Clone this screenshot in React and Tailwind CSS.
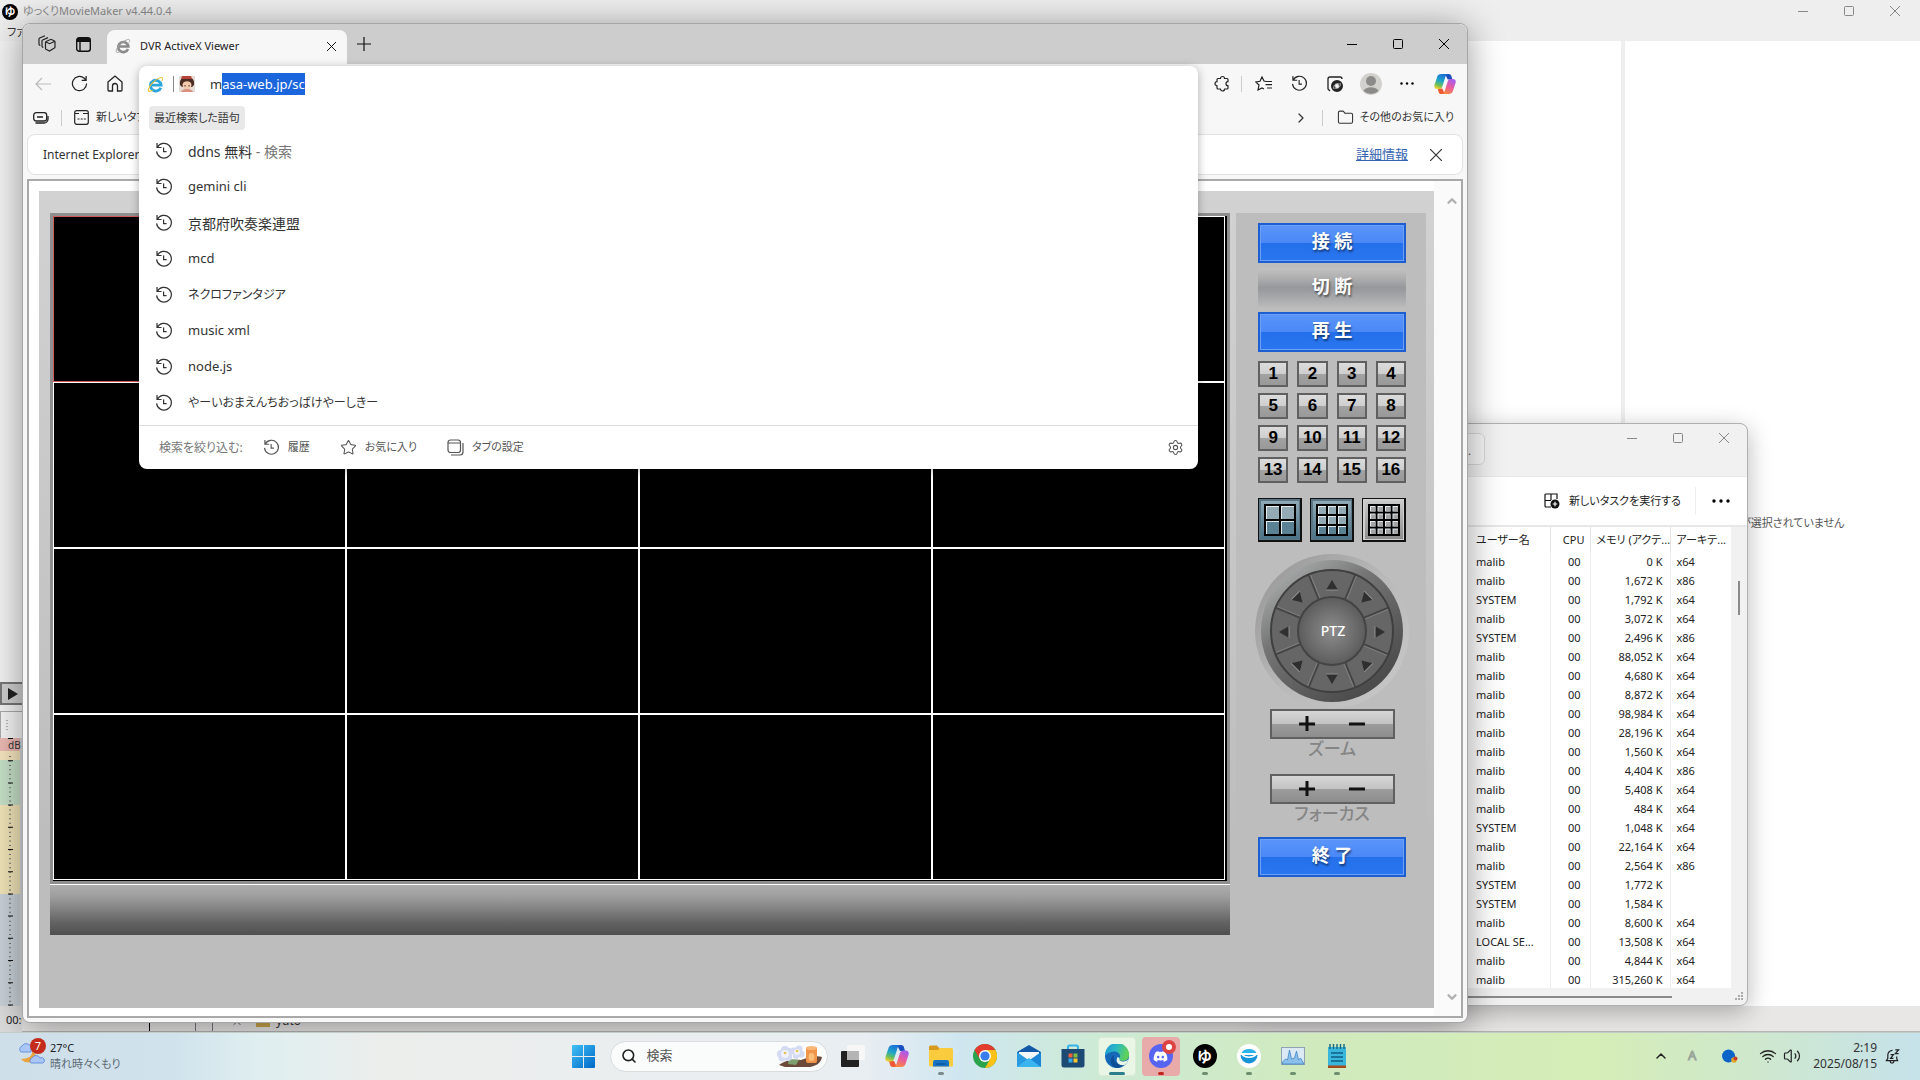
import { useEffect, useRef } from "react";
import {
  ChevronUp,
  ChevronDown,
  ChevronRight,
  Search,
  Settings,
  Star,
  Folder,
  Wifi,
  Volume2,
} from "lucide-react";
import { FaDiscord } from "react-icons/fa";

const history = [
  { text: "ddns 無料", suffix: " - 検索", size: "text-[14px]" },
  { text: "gemini cli" },
  { text: "京都府吹奏楽連盟", size: "text-[14px]" },
  { text: "mcd" },
  { text: "ネクロファンタジア", size: "text-[12px]" },
  { text: "music xml" },
  { text: "node.js" },
  { text: "やーいおまえんちおっばけやーしきー", size: "text-[12px]" },
];

const processes = [
  ["malib", "0 K", "x64"],
  ["malib", "1,672 K", "x86"],
  ["SYSTEM", "1,792 K", "x64"],
  ["malib", "3,072 K", "x64"],
  ["SYSTEM", "2,496 K", "x86"],
  ["malib", "88,052 K", "x64"],
  ["malib", "4,680 K", "x64"],
  ["malib", "8,872 K", "x64"],
  ["malib", "98,984 K", "x64"],
  ["malib", "28,196 K", "x64"],
  ["malib", "1,560 K", "x64"],
  ["malib", "4,404 K", "x86"],
  ["malib", "5,408 K", "x64"],
  ["malib", "484 K", "x64"],
  ["SYSTEM", "1,048 K", "x64"],
  ["malib", "22,164 K", "x64"],
  ["malib", "2,564 K", "x86"],
  ["SYSTEM", "1,772 K", ""],
  ["SYSTEM", "1,584 K", ""],
  ["malib", "8,600 K", "x64"],
  ["LOCAL SE...", "13,508 K", "x64"],
  ["malib", "4,844 K", "x64"],
  ["malib", "315,260 K", "x64"],
];

/* ---------- icons ---------- */

const HistoryIcon = ({ className = "size-[18px]" }) => (
  <svg viewBox="0 0 18 18" fill="none" stroke="currentColor" strokeWidth="1.2" className={className}>
    <path d="M2 1v4.500h4.500M2.300 5.500A7.400 7.400 0 1 1 1.600 9.400" />
    <path d="M8.600 5.400v4.200h3" />
  </svg>
);

const CopilotIcon = ({ className }) => (
  <svg viewBox="0 0 24 24" className={className}>
    <defs>
      <linearGradient id="cpA" x1="0.6" y1="0" x2="0.3" y2="1">
        <stop offset="0" stopColor="#1a6fd6" />
        <stop offset="0.45" stopColor="#1fa6c9" />
        <stop offset="0.75" stopColor="#6bbf5a" />
        <stop offset="1" stopColor="#f3cf2c" />
      </linearGradient>
      <linearGradient id="cpB" x1="0.7" y1="0" x2="0.3" y2="1">
        <stop offset="0" stopColor="#a35cf0" />
        <stop offset="0.5" stopColor="#e85aa0" />
        <stop offset="1" stopColor="#fb8a3c" />
      </linearGradient>
    </defs>
    <path d="M12 1h4c2 0 2.600 1 3.100 2.800L20 7h-5z" fill="#1a4fc0" />
    <path d="M12 23H8c-2 0-2.600-1-3.100-2.800L4 17h5z" fill="#ee5a34" />
    <path d="M8 1h7c-1.600.6-2.200 2-2.800 4l-3 9.500C8.500 16.600 7.600 17.500 5.600 17.500H3.500C.6 17.500-.2 15.400.6 12.700L3.500 4C4.200 2 5.500 1 8 1z" fill="url(#cpA)" />
    <path d="M16 23H9c1.600-.6 2.200-2 2.800-4l3-9.500c.7-2.100 1.600-3 3.600-3h2.100c2.900 0 3.700 2.100 2.900 4.800L20.500 20c-.7 2-2 3-4.500 3z" fill="url(#cpB)" />
  </svg>
);

const IEIcon = ({ className, color = "#2ba6dd", ring = "#f1c232" }) => (
  <svg viewBox="0 0 24 24" className={className} fill="none">
    <path d="M19.500 16.500A7.600 7.600 0 1 1 20 12.800H6" stroke={color} strokeWidth="4" />
    <path d="M21 7c2-4.500.5-6-4-4C11 5.500 3.500 13 2 18.500c-1 4 2 4 6 1.500" stroke={ring} strokeWidth="1.500" />
  </svg>
);

const MinusLine = ({ className }) => (
  <svg viewBox="0 0 10 10" className={className} stroke="currentColor">
    <path d="M0 5.500h10" />
  </svg>
);
const Square = ({ className }) => (
  <svg viewBox="0 0 10 10" className={className} stroke="currentColor" fill="none">
    <rect x=".5" y=".5" width="9" height="9" rx="1" />
  </svg>
);
const Cross = ({ className }) => (
  <svg viewBox="0 0 10 10" className={className} stroke="currentColor" fill="none">
    <path d="M0 0l10 10M10 0L0 10" />
  </svg>
);

const WindowButtons = ({ className = "" }) => (
  <div className={`flex shrink-0 ${className}`}>
    <button aria-label="最小化" className="w-[46px] grid place-items-center">
      <MinusLine className="size-[10px]" />
    </button>
    <button aria-label="最大化" className="w-[46px] grid place-items-center">
      <Square className="size-[10px]" />
    </button>
    <button aria-label="閉じる" className="w-[46px] grid place-items-center">
      <Cross className="size-[10px]" />
    </button>
  </div>
);

const YmmIcon = ({ className }) => (
  <span className={`rounded-full bg-black text-white font-bold grid place-items-center leading-none ${className}`}>
    ゆ
  </span>
);

/* ---------- movie maker, behind everything ---------- */

const MovieMaker = () => (
  <div className="absolute inset-0 flex flex-col bg-white">
    <div className="h-[41px] shrink-0 bg-[#eeeeee] flex justify-between">
      <div className="flex flex-col">
        <div className="flex items-center gap-[5px] pl-[2px] h-[23px]">
          <YmmIcon className="size-4 text-[11px]" />
          <span className="text-[11px] text-[#8c8c8c]">ゆっくりMovieMaker v4.44.0.4</span>
        </div>
        <button className="text-[11px] leading-[18px] pl-[7px] text-left text-[#333]">ファ</button>
      </div>
      <WindowButtons className="h-[21px] text-[#888] pr-[2px]" />
    </div>
    <div className="flex-1 min-h-0 flex">
      <div className="w-[22px] shrink-0 bg-[#f3f3f3] flex flex-col justify-end">
        <button aria-label="再生" className="h-[23px] w-[30px] border-2 border-[#777] bg-[#cfcfcf] pl-[6px] shrink-0">
          <svg viewBox="0 0 10 12" className="h-[12px] w-[10px]">
            <path d="M0 0l10 6-10 6z" fill="#222" />
          </svg>
        </button>
        <div className="mt-[6px] h-[27px] w-[30px] shrink-0 border-t border-l border-[#aaa] bg-[#f5f5f5] pt-2 pl-1">
          <svg viewBox="0 0 4 12" className="h-[12px] w-[4px]">
            <path d="M2 0v12" stroke="#777" strokeDasharray="1 2" />
          </svg>
        </div>
        <div className="h-[268px] shrink-0 flex bg-[#d6d8da]">
          <div className="w-5 h-full relative">
            <div className="h-[13px] bg-[#ecb9b4] text-[10px] leading-[14px] pl-2 text-[#333]">dB</div>
            <div className="h-[9px] bg-[#f7e6bf]" />
            <div className="h-[45px] bg-[#c6e0c7]" />
            <div className="h-[89px] bg-[#f1e4b8]" />
            <div className="h-[112px] bg-[#c9d2d8]" />
            <svg viewBox="0 0 20 268" className="absolute inset-0 w-5 h-[268px]">
              <path d="M10 18v250" stroke="#777" strokeWidth="2" strokeDasharray="1 3.450" />
              <path d="M10.500 0v268" stroke="#111" strokeWidth="5" strokeDasharray="1 21.200" />
            </svg>
          </div>
        </div>
        <div className="h-[26px] shrink-0 bg-[#dcdcdc] pl-[6px] text-[11px] leading-[28px] text-[#222] whitespace-nowrap">00:0</div>
      </div>
      <div className="flex-1 flex flex-col min-w-0">
        <div className="flex-1 flex justify-end min-h-0">
          <div className="w-[299px] border-l-4 border-[#eeeeee] pl-[115px] pt-[474px] text-[11px] text-[#555] whitespace-nowrap">
            が選択されていません
          </div>
        </div>
        <div className="h-[26px] shrink-0 bg-[#e9e6e6] border-b border-[#b5b5b5] flex items-end overflow-hidden">
          <span className="h-[14px] border-r border-black w-[128px]" />
          <span className="h-[14px] border-r border-[#777] w-[46px]" />
          <span className="h-[14px] border-r border-[#777] w-[17px]" />
          <ChevronUp className="size-3 text-[#555] ml-[18px] mb-[2px]" />
          <span className="h-[10px] w-[14px] bg-[#c9a64a] ml-[13px] mb-[4px]" />
          <span className="text-[12px] leading-[16px] ml-[6px] mb-[2px] text-[#333]">yuto</span>
        </div>
      </div>
    </div>
  </div>
);

/* ---------- task manager ---------- */

const TaskManager = () => (
  <section className="absolute right-[172px] top-[423px] bottom-[26px] w-[500px] rounded-lg border border-[#b0b0b0] bg-[#f1f1f1] shadow-[0_6px_24px_rgba(0,0,0,0.28)] flex flex-col overflow-hidden">
    <div className="h-[52px] shrink-0 flex items-start justify-between">
      <div className="mt-[9px] h-[32px] w-[236px] rounded-md border border-[#d8d8d8] bg-[#f7f7f7] text-[11px] leading-[34px] text-[#444] text-right pr-[13px]">
        .
      </div>
      <WindowButtons className="h-[28px] text-[#888]" />
    </div>
    <div className="h-[51px] shrink-0 bg-white border-t border-b-2 border-[#e8e8e8] flex items-center justify-end">
      <button className="flex items-center gap-[9px] text-[11px] text-[#222] whitespace-nowrap">
        <svg viewBox="0 0 16 16" className="size-4" fill="none" stroke="#111" strokeWidth="1.200">
          <path d="M7 14H2a1 1 0 0 1-1-1V2a1 1 0 0 1 1-1h11v5M1 7.500h6M7 1v6" />
          <circle cx="11" cy="11" r="4.500" fill="#111" stroke="none" />
          <path d="M11 8.700v4.600M8.700 11h4.600" stroke="#fff" />
        </svg>
        新しいタスクを実行する
      </button>
      <span className="ml-[14px] h-7 border-l border-[#eee]" />
      <button aria-label="その他" className="ml-[16px] mr-[17px]">
        <svg viewBox="0 0 18 4" className="w-[18px] h-1">
          <circle cx="2" cy="2" r="1.700" />
          <circle cx="9" cy="2" r="1.700" />
          <circle cx="16" cy="2" r="1.700" />
        </svg>
      </button>
    </div>
    <div className="flex-1 min-h-0 flex">
      <div className="flex-1 bg-white pl-[221px] overflow-hidden">
        <table className="w-full table-fixed text-[11px] leading-[19px] text-[#222]">
          <colgroup>
            <col className="w-[80px]" />
            <col className="w-[40px]" />
            <col className="w-[80px]" />
            <col />
          </colgroup>
          <thead>
            <tr className="h-[25px] whitespace-nowrap [&>th]:font-normal [&>th]:text-[11px] [&>th]:text-left">
              <th className="border-r border-[#e4e4e4] pl-[6px]">ユーザー名</th>
              <th className="border-r border-[#e4e4e4]"><span className="block text-right pr-[5px]">CPU</span></th>
              <th className="border-r border-[#e4e4e4] pl-[6px]">メモリ (アクテ...</th>
              <th className="pl-[6px]">アーキテ...</th>
            </tr>
          </thead>
          <tbody>
            {processes.map((p, i) => (
              <tr key={i} className="h-[19px] whitespace-nowrap">
                <td className="border-r border-[#eeeeee] pl-[6px]">{p[0]}</td>
                <td className="border-r border-[#eeeeee] text-right pr-[9px]">00</td>
                <td className="border-r border-[#eeeeee] text-right pr-[7px]">{p[1]}</td>
                <td className="pl-[6px]">{p[2]}</td>
              </tr>
            ))}
          </tbody>
        </table>
      </div>
      <div className="w-[16px] shrink-0 flex justify-center pt-[54px]">
        <div className="h-[34px] w-[2px] bg-[#8a8a8a]" />
      </div>
    </div>
    <div className="h-[17px] shrink-0 flex justify-between items-center">
      <div className="h-[2px] w-[423px] bg-[#8a8a8a]" />
      <svg viewBox="0 0 9 9" className="size-[9px] mr-[3px]" fill="#aaa">
        <path d="M6 0h2v2H6zM3 3h2v2H3zM6 3h2v2H6zM0 6h2v2H0zM3 6h2v2H3zM6 6h2v2H6z" />
      </svg>
    </div>
  </section>
);

/* ---------- DVR page ---------- */

const BlueButton = ({ children, className = "" }) => (
  <button
    className={`h-[40px] w-full border-2 border-[#1d5fd0] shadow-[inset_0_0_0_1px_#6ba2f8] bg-[linear-gradient(#5b95fb_0%,#4a88f6_50%,#2470ea_51%,#2a76f0_100%)] text-white text-[18px] font-bold leading-[28px] pb-1 [text-shadow:1px_2px_2px_rgba(0,0,0,0.5)] ${className}`}
  >
    {children}
  </button>
);

const LayoutButton = ({ n, blue }) => {
  const step = 30 / n;
  const cells = [];
  for (let r = 0; r < n; r++) {
    for (let c = 0; c < n; c++) cells.push([7 + c * step, 7 + r * step]);
  }
  return (
    <button aria-label={`${n * n}分割`} className="size-[44px]">
      <svg viewBox="0 0 44 44" className="size-[44px]">
        <defs>
          <linearGradient id={`lay${n}`} x1="0" y1="0" x2="0" y2="1">
            <stop offset="0" stopColor={blue ? "#8fa9b6" : "#c9c9c9"} />
            <stop offset="1" stopColor={blue ? "#4a7286" : "#8d8d8d"} />
          </linearGradient>
        </defs>
        <rect width="44" height="44" fill="#111" />
        <rect x="1" y="1" width="41" height="41" fill={blue ? "#5b7684" : "#d0d0d0"} />
        <rect x="3" y="3" width="38" height="38" fill={`url(#lay${n})`} />
        <rect x="6" y="6" width="32" height="32" fill="#000" />
        {cells.map(([x, y], i) => (
          <g key={i}>
            <rect x={x + 1} y={y + 1} width={step - 2} height={step - 2} fill="#e4eaed" />
            <rect
              x={x + 2}
              y={y + 2}
              width={step - 3}
              height={step - 3}
              fill={blue ? (y > 19 ? "#5b8294" : "#93aab5") : "#a5a5a5"}
            />
          </g>
        ))}
      </svg>
    </button>
  );
};

const arrows = [
  [78, 32, 0],
  [111, 46, 225],
  [126, 79, 90],
  [111, 111, 315],
  [78, 126, 180],
  [45, 111, 45],
  [30, 79, 270],
  [45, 46, 135],
];

const PtzPad = () => (
  <svg viewBox="0 0 156 156" className="w-[156px] h-[156px] shrink-0" role="img" aria-label="PTZ">
    <defs>
      <linearGradient id="ptzRing" x1="0.150" y1="0.100" x2="0.750" y2="0.900">
        <stop offset="0" stopColor="#a5a8a8" />
        <stop offset="0.350" stopColor="#757575" />
        <stop offset="1" stopColor="#4c4c4c" />
      </linearGradient>
      <linearGradient id="ptzHalo" x1="0" y1="0" x2="0.900" y2="0.800">
        <stop offset="0" stopColor="#949494" />
        <stop offset="0.600" stopColor="#b9b9b9" />
        <stop offset="1" stopColor="#c4c4c4" />
      </linearGradient>
      <radialGradient id="ptzHub">
        <stop offset="0" stopColor="#8d8d8d" />
        <stop offset="1" stopColor="#5c5c5c" />
      </radialGradient>
    </defs>
    <circle cx="78" cy="78" r="77" fill="url(#ptzHalo)" />
    <circle cx="78" cy="78" r="71" fill="url(#ptzRing)" />
    <circle cx="78" cy="78" r="61" fill="#666" stroke="#3f3f3f" strokeWidth="2" />
    {[22.5, 67.5, 112.5, 157.5, 202.5, 247.5, 292.5, 337.5].map((a) => (
      <g key={a} transform={`rotate(${a} 78 78)`}>
        <path d="M78 17v28" stroke="#444" strokeWidth="2" />
        <path d="M79.500 18v26" stroke="#808080" strokeWidth="1" />
      </g>
    ))}
    <circle cx="78" cy="78" r="34" fill="url(#ptzHub)" stroke="#444" strokeWidth="2" />
    {arrows.map(([x, y, a]) => (
      <g key={a} transform={`translate(${x} ${y}) rotate(${a})`}>
        <path d="M0-5L6 5H-6z" fill="#2f2f2f" />
        <path d="M6 5H-6" stroke="#8f8f8f" strokeWidth="1" />
      </g>
    ))}
    <text x="79" y="83" textAnchor="middle" fill="#fff" fontSize="14" fontWeight="500">
      PTZ
    </text>
  </svg>
);

const PlusMinus = ({ label }) => (
  <div className="flex flex-col items-center">
    <div className="h-[30px] w-[125px] border-2 border-[#606060] bg-[linear-gradient(#d6d6d6_0%,#c2c2c2_50%,#9c9c9c_51%,#8d8d8d_100%)] flex items-center justify-center gap-[34px]">
      <button aria-label={`${label} +`}>
        <svg viewBox="0 0 16 16" className="size-4">
          <path d="M8 0v15M0 8h16" stroke="#111" strokeWidth="3" />
        </svg>
      </button>
      <button aria-label={`${label} -`}>
        <svg viewBox="0 0 16 16" className="size-4">
          <path d="M0 8h16" stroke="#111" strokeWidth="3" />
        </svg>
      </button>
    </div>
    <span className="text-[17px] leading-[20px] font-medium text-[#858585]">{label}</span>
  </div>
);

const DvrPage = () => (
  <div className="flex-1 min-h-0 mx-[4px] mb-[4px] mt-[4px] border-2 border-[#a9a9a9] bg-white flex">
    <div className="flex-1 min-w-0 ml-[10px] mt-[10px] mb-[8px] pt-[22px] pl-[11px] pr-[8px] bg-[linear-gradient(#d2d2d2,#bdbdbd_80%)] flex gap-[6px]">
      <div className="flex-1 flex flex-col pb-[73px]">
        <div className="flex-1 border-[3px] border-[#8f8f8f] flex flex-col">
          <div className="flex-1 bg-black border-r-2 border-b border-black grid grid-cols-4 grid-rows-4">
            {Array.from({ length: 16 }, (_, i) => (
              <div key={i} className={i === 0 ? "border border-[#d05a5a]" : "border border-white"} />
            ))}
          </div>
        </div>
        <div className="h-[51px] shrink-0 border-t border-white bg-[linear-gradient(#adadad,#9c9c9c_25%,#636363_75%,#4f4f4f)]" />
      </div>
      <div className="w-[190px] shrink-0 bg-[#bdbdbd]">
        <div className="w-[148px] ml-[22px] pt-[10px] flex flex-col">
          <BlueButton>接 続</BlueButton>
          <button className="my-[5px] h-[39px] bg-[linear-gradient(#c2c2c2_0%,#b3b3b3_20%,#96989b_50%,#9b9da0_60%,#bababa_100%)] text-white text-[18px] font-bold leading-[28px] pb-1 [text-shadow:1px_2px_2px_rgba(0,0,0,0.5)]">
            切 断
          </button>
          <BlueButton>再 生</BlueButton>
          <div className="mt-[9px] grid grid-cols-4 gap-x-[9px] gap-y-[6px]">
            {Array.from({ length: 16 }, (_, i) => (
              <button
                key={i}
                className="h-[26px] border-2 border-[#606060] bg-[linear-gradient(#dcdcdc_0%,#cecece_50%,#a2a2a2_51%,#999_100%)] font-['Liberation_Sans'] font-bold text-[17px] leading-[22px] text-black"
              >
                {i + 1}
              </button>
            ))}
          </div>
          <div className="mt-[15px] flex justify-between">
            <LayoutButton n={2} blue />
            <LayoutButton n={3} blue />
            <LayoutButton n={4} />
          </div>
          <div className="mt-[11px] flex justify-center">
            <PtzPad />
          </div>
          <div className="flex flex-col gap-[15px]">
            <PlusMinus label="ズーム" />
            <PlusMinus label="フォーカス" />
          </div>
          <BlueButton className="mt-[13px]">終 了</BlueButton>
        </div>
      </div>
    </div>
    <div className="w-[27px] shrink-0 bg-[#fafafa] flex flex-col items-center justify-between pl-[8px] pt-[13px] pb-[12px] text-[#b0b0b0]">
      <ChevronUp className="size-[14px]" strokeWidth={4} />
      <ChevronDown className="size-[14px]" strokeWidth={4} />
    </div>
  </div>
);

/* ---------- address bar with suggestions ---------- */

const Suggestions = () => {
  const url = useRef(null);
  useEffect(() => {
    url.current.focus();
    url.current.setSelectionRange(1, 14);
  }, []);
  return (
    <div className="absolute left-[116px] right-[269px] top-[42px] bg-white rounded-lg shadow-[0_2px_10px_rgba(0,0,0,0.3)]">
      <div className="h-[36px] flex items-center pl-[8px]">
        <IEIcon className="size-[17px]" />
        <span className="ml-[9px] h-4 border-l border-[#888]" />
        <svg viewBox="0 0 16 16" className="size-4 ml-[5px]">
          <rect width="16" height="16" fill="#e6dcd6" />
          <path d="M1 9C0 3 4 1 8 1s8 2 7 8l-2 2H3z" fill="#4a2c22" />
          <circle cx="8" cy="9" r="4.500" fill="#f3c9ae" />
          <path d="M3 8c2-3 7-4 10 0L12 4H5z" fill="#4a2c22" />
          <path d="M3 0h9l1 3H2z" fill="#b5433a" />
          <path d="M2 16c1-4 11-4 12 0z" fill="#d98f80" />
          <path d="M6 9v1.500M10 9v1.500" stroke="#432" />
        </svg>
        <input
          ref={url}
          aria-label="アドレス"
          defaultValue="masa-web.jp/sc"
          className="ml-[15px] w-[600px] outline-none text-[13px] leading-[22px] h-[22px] text-[#333] selection:bg-[#1b66dd] selection:text-white"
        />
      </div>
      <span className="block w-fit mt-[4px] ml-[10px] h-6 rounded bg-[#e9e9e9] px-[5px] text-[11px] leading-6 text-[#333]">
        最近検索した語句
      </span>
      <ul className="mt-[3px] mb-[4px]">
        {history.map((h) => (
          <li key={h.text} className="h-9 flex items-center pl-[16px] gap-[15px] text-[#333]">
            <HistoryIcon className="size-[18px]" />
            <span className={h.size || "text-[13px]"}>
              {h.text}
              {h.suffix && <span className="text-[#767676] whitespace-pre">{h.suffix}</span>}
            </span>
          </li>
        ))}
      </ul>
      <div className="h-[44px] border-t border-[#dcdcdc] flex items-center pl-[20px] pr-[14px] text-[11px] text-[#555]">
        <span className="text-[12px] text-[#777]">検索を絞り込む:</span>
        <button className="ml-[20px] flex items-center gap-[8px]">
          <HistoryIcon className="size-[17px]" />
          履歴
        </button>
        <button className="ml-[30px] flex items-center gap-[8px]">
          <Star className="size-[17px]" strokeWidth={1.5} />
          お気に入り
        </button>
        <button className="ml-[30px] flex items-center gap-[8px]">
          <svg viewBox="0 0 17 17" className="size-[17px]" fill="none" stroke="currentColor" strokeWidth="1.200">
            <rect x="1" y="1" width="12.500" height="12.500" rx="2.500" />
            <path d="M1 4h12.500M16 4v9a3 3 0 0 1-3 3H4" />
          </svg>
          タブの設定
        </button>
        <button aria-label="設定" className="ml-auto">
          <Settings className="size-[17px]" strokeWidth={1.5} />
        </button>
      </div>
    </div>
  );
};

/* ---------- browser ---------- */

const Browser = () => (
  <section className="absolute left-[22px] right-[452px] top-[23px] bottom-[9px] rounded-lg border border-[#a6a6a6] bg-[#f7f7f7] shadow-[0_4px_36px_rgba(0,0,0,0.4)] flex flex-col">
    <div className="h-[40px] shrink-0 bg-[#cdcdcd] rounded-t-lg flex text-black">
      <button aria-label="ワークスペース" className="w-[48px] grid place-items-center">
        <svg viewBox="0 0 18 18" className="size-[18px]" fill="none" stroke="#222" strokeWidth="1.200">
          <path d="M7.500 7.500a1 1 0 0 1 .6-1L13 4.300l3.500 1.700a1 1 0 0 1 .5 1v5a1 1 0 0 1-.6 1L11.500 16 8 14.300a1 1 0 0 1-.5-1zM8 7l3.500 1.700L16.500 6.500" />
          <path d="M5.300 12.500l-.8-.4a1 1 0 0 1-.5-.9V6a1 1 0 0 1 .6-1L10 2.600" />
          <path d="M2.300 10.500l-.8-.4A1 1 0 0 1 1 9.200V4a1 1 0 0 1 .6-1L7 .8" />
        </svg>
      </button>
      <button aria-label="タブ操作" className="w-[24px] grid place-items-center">
        <svg viewBox="0 0 15 15" className="size-[15px]" fill="none" stroke="#111" strokeWidth="1.400">
          <rect x=".7" y=".7" width="13.600" height="13.600" rx="2.500" />
          <path d="M1 3h13" strokeWidth="4" />
          <path d="M4 3v11" />
        </svg>
      </button>
      <div className="ml-[12px] mt-[6px] w-[240px] rounded-t-lg bg-[#f7f7f7] flex items-center pl-[8px] pr-[11px] pb-[2px] text-[11px]">
        <IEIcon className="size-4" color="#8a8a8a" ring="#a5a5a5" />
        <span className="ml-[9px] text-[#222]">DVR ActiveX Viewer</span>
        <button aria-label="タブを閉じる" className="ml-auto">
          <Cross className="size-[9px]" />
        </button>
      </div>
      <button aria-label="新しいタブ" className="ml-[10px]">
        <svg viewBox="0 0 14 14" className="size-[14px]" stroke="#111" strokeWidth="1.200">
          <path d="M7 0v14M0 7h14" />
        </svg>
      </button>
      <WindowButtons className="ml-auto" />
    </div>
    <div className="h-[39px] shrink-0 flex items-center text-[#222]">
      <button aria-label="戻る" className="w-[40px] grid place-items-center text-[#bbb]">
        <svg viewBox="0 0 16 14" className="w-4 h-[14px]" fill="none" stroke="currentColor" strokeWidth="1.200">
          <path d="M16 7H1M7 1L1 7l6 6" />
        </svg>
      </button>
      <button aria-label="更新" className="w-[32px] grid place-items-center">
        <svg viewBox="0 0 18 18" className="size-[17px]" fill="none" stroke="currentColor" strokeWidth="1.300">
          <path d="M16.500 9A7.500 7.500 0 1 1 14 3.500L16 5.500M16 1v4.700h-4.700" />
        </svg>
      </button>
      <button aria-label="ホーム" className="w-[40px] grid place-items-center">
        <svg viewBox="0 0 16 17" className="w-4 h-[17px]" fill="none" stroke="currentColor" strokeWidth="1.300">
          <path d="M1 7l7-6 7 6v8a1 1 0 0 1-1 1h-3.500v-5a2.500 2.500 0 0 0-5 0v5H2a1 1 0 0 1-1-1z" />
        </svg>
      </button>
      <div className="ml-auto flex items-center pr-[6px]">
        <button aria-label="拡張機能" className="w-[32px] grid place-items-center">
          <svg viewBox="0 0 16 17" className="w-4 h-[17px]" fill="none" stroke="currentColor" strokeWidth="1.200" strokeLinejoin="round">
            <path d="M4 3.500h2.500a2 2 0 0 1 4 0H13a1 1 0 0 1 1 1v2.200a2 2 0 0 0 0 4V13a1 1 0 0 1-1 1h-2.500a2 2 0 0 1-4 0H4a1 1 0 0 1-1-1v-2.300a2 2 0 0 1 0-4V4.500a1 1 0 0 1 1-1z" />
          </svg>
        </button>
        <span className="ml-[3px] h-4 border-l border-[#ccc]" />
        <button aria-label="お気に入り" className="ml-[3px] w-[36px] grid place-items-center">
          <svg viewBox="0 0 17 16" className="w-[17px] h-4" fill="none" stroke="currentColor" strokeWidth="1.200">
            <path d="M11 5.500L9 5 7 1 5 5.300.8 6 4 9l-1 5 4-2 2 1M11 5.500h6M10.500 8.700H17M12 12h5" />
          </svg>
        </button>
        <button aria-label="履歴" className="w-[36px] grid place-items-center">
          <HistoryIcon className="size-[17px]" />
        </button>
        <button aria-label="IE モード" className="w-[36px] grid place-items-center">
          <svg viewBox="0 0 16 16" className="size-4" fill="none" stroke="#222" strokeWidth="1.300">
            <path d="M3 15L1 13V3a2 2 0 0 1 2-2h10a2 2 0 0 1 2 2" />
            <circle cx="10" cy="10" r="4" strokeWidth="4" />
            <path d="M7 13c-1-4 2-6 5-5M13 7c1 4-2 6-5 5" stroke="#f7f7f7" strokeWidth=".8" />
          </svg>
        </button>
        <button aria-label="プロファイル" className="w-[36px] grid place-items-center">
          <svg viewBox="0 0 22 22" className="size-[22px]">
            <circle cx="11" cy="11" r="11" fill="#d3d1ce" />
            <circle cx="11" cy="8" r="5" fill="#8d8b89" />
            <path d="M3.500 18c2-5 13-5 15 0a11 11 0 0 1-15 0z" fill="#8d8b89" />
          </svg>
        </button>
        <button aria-label="メニュー" className="w-[36px] grid place-items-center">
          <svg viewBox="0 0 14 3" className="w-[14px] h-[3px]">
            <circle cx="1.500" cy="1.500" r="1.200" />
            <circle cx="7" cy="1.500" r="1.200" />
            <circle cx="12.500" cy="1.500" r="1.200" />
          </svg>
        </button>
        <button aria-label="Copilot" className="w-[36px] pl-1 grid place-items-center">
          <CopilotIcon className="size-[22px]" />
        </button>
      </div>
    </div>
    <div className="h-[29px] shrink-0 flex items-center text-[11px] text-[#333]">
      <svg viewBox="0 0 16 12" className="ml-[10px] w-4 h-3 shrink-0" fill="none" stroke="#222" strokeWidth="1.300">
        <rect x=".7" y=".7" width="13" height="8.300" rx="2.500" />
        <path d="M4 5h6M2.500 11H11a4 4 0 0 0 4-4V4" />
      </svg>
      <span className="ml-[12px] h-4 border-l border-[#ccc]" />
      <button className="ml-[12px] flex items-center gap-[7px]">
        <svg viewBox="0 0 15 15" className="size-[15px]" fill="none" stroke="#222" strokeWidth="1.200">
          <rect x=".7" y=".7" width="13.600" height="13.600" rx="2" />
          <path d="M1 3.500h4M9 3.500h5M3.500 9h2M6.700 9h2M9.800 9h2" />
        </svg>
        新しいタブ
      </button>
      <button aria-label="さらに表示" className="ml-auto">
        <ChevronRight className="size-4" strokeWidth={1.8} />
      </button>
      <span className="ml-[13px] h-4 border-l border-[#ccc]" />
      <button className="ml-[14px] mr-[13px] flex items-center gap-[6px]">
        <Folder className="size-[17px]" strokeWidth={1.5} />
        その他のお気に入り
      </button>
    </div>
    <div className="mx-[4px] mt-[2px] h-[41px] shrink-0 rounded-lg border border-[#e2e2e2] bg-white flex items-center pl-[15px] text-[12px] text-[#333]">
      <span>Internet Explorer</span>
      <a href="#" className="ml-auto text-[13px] text-[#3565b0] underline">
        詳細情報
      </a>
      <button aria-label="閉じる" className="ml-[22px] mr-[20px]">
        <Cross className="size-3" />
      </button>
    </div>
    <DvrPage />
    <Suggestions />
  </section>
);

/* ---------- taskbar ---------- */

const TaskButton = ({ label, dot = "", className = "", children }) => (
  <button aria-label={label} className="relative w-[44px] h-[46px] flex items-center justify-center">
    <span className={`w-[38px] h-[39px] rounded flex items-center justify-center ${className}`}>{children}</span>
    {dot && <span className={`absolute bottom-[4px] h-[3px] rounded-full ${dot}`} />}
  </button>
);

const Taskbar = () => (
  <footer className="h-[48px] pb-[1px] shrink-0 grid grid-cols-[1fr_auto_1fr] items-center border-t border-[#c3cdc8] bg-[linear-gradient(90deg,#cfdfea_0%,#d0e2ec_9%,#deeef0_13%,#eceeec_20%,#e9eef2_45%,#cfe6f0_50%,#cdead6_57%,#d0eabe_68%,#d5edb6_83%,#cfe8cc_91%,#c6e2ea_100%)]">
    <button className="flex items-center gap-[4px] ml-[18px] w-fit text-left">
      <svg viewBox="0 0 28 28" className="size-7 overflow-visible">
        <path d="M3 17a10 7 0 0 0 18-1l-7-7c1 5-4 8-11 8z" fill="#eaa23a" />
        <path d="M3 10a3.500 3.500 0 0 1 1-6 5 5 0 0 1 9 1v5z" fill="#a9c6f7" stroke="#6c94dc" />
        <path d="M13 21a3 3 0 0 1 1-5 4.500 4.500 0 0 1 8 0 2.500 2.500 0 0 1 3 5z" fill="#a9c6f7" stroke="#6c94dc" />
        <circle cx="20" cy="4" r="8" fill="#c42b1c" />
        <text x="20" y="8" textAnchor="middle" fontSize="11" fill="#fff">7</text>
      </svg>
      <span className="flex flex-col text-[11px] leading-4">
        <span className="text-[#222]">27°C</span>
        <span className="text-[#5b6a72]">晴れ時々くもり</span>
      </span>
    </button>
    <div className="flex items-center">
      <TaskButton label="スタート">
        <svg viewBox="0 0 23 23" className="size-[23px]">
          <defs>
            <linearGradient id="winLogo" x1="0" y1="0" x2="1" y2="1">
              <stop offset="0" stopColor="#3fc0f5" />
              <stop offset="1" stopColor="#0068c8" />
            </linearGradient>
          </defs>
          <path d="M0 1a1 1 0 0 1 1-1h10v11H0zM12 0h10a1 1 0 0 1 1 1v10H12zM0 12h11v11H1a1 1 0 0 1-1-1zM12 12h11v10a1 1 0 0 1-1 1H12z" fill="url(#winLogo)" />
        </svg>
      </TaskButton>
      <label className="ml-[4px] mr-[3px] h-[31px] w-[218px] rounded-full border border-[#d8dcde] bg-[#fafbfb] flex items-center pl-[10px] pr-[2px]">
        <Search className="size-4 text-[#222]" strokeWidth={2.4} />
        <input placeholder="検索" aria-label="検索" className="ml-[10px] w-[100px] text-[13px] outline-none placeholder:text-[#555]" />
        <svg viewBox="0 0 50 26" className="w-[50px] h-[26px] ml-auto">
          <path d="M4 22c6-5 14-6 22-5 8-3 16-5 21-3-1 6-6 9-12 10H10z" fill="#6b4a3a" />
          <path d="M14 16l10 1-3 5-8-1z" fill="#7da06e" />
          <g fill="#d3daf1">
            <circle cx="6" cy="11" r="4" />
            <circle cx="13" cy="14" r="4" />
            <circle cx="10" cy="7" r="4" />
            <circle cx="14" cy="9" r="4" />
            <circle cx="7" cy="15" r="3.500" />
            <circle cx="24" cy="6" r="3.500" />
            <circle cx="19" cy="8" r="3.500" />
            <circle cx="26" cy="11" r="3.500" />
            <circle cx="21" cy="13" r="3" />
          </g>
          <circle cx="10" cy="11" r="4" fill="#f0f1fb" />
          <circle cx="22" cy="9" r="3" fill="#f0f1fa" />
          <circle cx="10" cy="10" r="1.300" fill="#e5c34f" />
          <circle cx="22" cy="8" r="1.300" fill="#e5c34f" />
          <rect x="31" y="4" width="11" height="16" rx="2" fill="#f0954a" />
          <ellipse cx="36.500" cy="5" rx="5.500" ry="2" fill="#f9b877" />
          <ellipse cx="36.500" cy="14" rx="3" ry="4" fill="#fbc07a" />
        </svg>
      </label>
      <TaskButton label="タスク ビュー">
        <svg viewBox="0 0 24 24" className="size-6">
          <rect x="6" y="1" width="18" height="15" rx="2" fill="#f7f7f7" />
          <rect x="0" y="7" width="18" height="16" rx="1" fill="#222" />
          <path d="M6 7h12v9H6z" fill="#b5b5b5" />
        </svg>
      </TaskButton>
      <TaskButton label="Copilot">
        <CopilotIcon className="size-6" />
      </TaskButton>
      <TaskButton label="エクスプローラー" dot="w-[6px] bg-[#7d8a8c]">
        <svg viewBox="0 0 24 22" className="w-6 h-[22px]">
          <path d="M0 2a1.500 1.500 0 0 1 1.500-1.500H8L11 4v4H0z" fill="#d89a1c" />
          <path d="M0 5h9l2-2h11.500A1.500 1.500 0 0 1 24 4.500V20a1.500 1.500 0 0 1-1.500 1.500h-21A1.500 1.500 0 0 1 0 20z" fill="#fbcb3e" />
          <path d="M4 21.500V17a2 2 0 0 1 2-2h12a2 2 0 0 1 2 2v4.500z" fill="#1773c4" />
          <path d="M7.500 19h9" stroke="#0d549c" strokeWidth="1.500" />
        </svg>
      </TaskButton>
      <TaskButton label="Chrome">
        <svg viewBox="0 0 24 24" className="size-6">
          <circle cx="12" cy="12" r="12" fill="#2ba24c" />
          <path d="M12 12L1.600 6A12 12 0 0 1 22.400 6z" fill="#e33b2e" />
          <path d="M12 6h10.400A12 12 0 0 1 12 24l5.200-9z" fill="#fbc116" />
          <path d="M1.600 6l5.200 9L12 6z" fill="#e33b2e" />
          <circle cx="12" cy="12" r="6" fill="#fff" />
          <circle cx="12" cy="12" r="4.600" fill="#3b7ded" />
        </svg>
      </TaskButton>
      <TaskButton label="メール">
        <svg viewBox="0 0 24 24" className="size-6">
          <path d="M0 8L12 1l12 7v14.500H0z" fill="#1259a8" />
          <path d="M2 8h20v8H2z" fill="#f5f8fb" />
          <path d="M0 8l12 8.500L0 23z" fill="#2a9be0" />
          <path d="M24 8L12 16.500 24 23z" fill="#1c86d6" />
          <path d="M0 23l12-9 12 9z" fill="#3bb5f0" />
        </svg>
      </TaskButton>
      <TaskButton label="Microsoft Store">
        <svg viewBox="0 0 24 24" className="size-6">
          <path d="M7 6V3a1.500 1.500 0 0 1 1.500-1.500h7A1.500 1.500 0 0 1 17 3v3" fill="none" stroke="#34b3e4" strokeWidth="2" />
          <path d="M.5 5h23v16a2.500 2.500 0 0 1-2.500 2.500H3A2.500 2.500 0 0 1 .5 21z" fill="#1c4a75" />
          <path d="M7.500 9.500h4v4h-4z" fill="#f0603a" />
          <path d="M12.500 9.500h4v4h-4z" fill="#83bf3e" />
          <path d="M7.500 14.500h4v4h-4z" fill="#35a9e8" />
          <path d="M12.500 14.500h4v4h-4z" fill="#fbc42c" />
        </svg>
      </TaskButton>
      <TaskButton label="Edge" dot="w-[16px] bg-[#2b7f8c]" className="bg-[#e9f6e6] border border-[#dcebd8]">
        <svg viewBox="0 0 24 24" className="size-6">
          <defs>
            <linearGradient id="edgeTop" x1="0" y1="0" x2="1" y2="0.300">
              <stop offset="0" stopColor="#1f96d8" />
              <stop offset="0.500" stopColor="#2ab8c4" />
              <stop offset="1" stopColor="#5fd05a" />
            </linearGradient>
          </defs>
          <circle cx="12" cy="12" r="12" fill="#1668b8" />
          <path d="M0 12A12 12 0 0 1 24 10c.5 5-3 7-6.500 7-3 0-4-1.500-3-3 2-4-2-7-6-6.500C4.500 8 1 10 0 12z" fill="url(#edgeTop)" />
          <path d="M9 11c-2 6 3 10.500 10 9-2 2.500-4 4-7 4C5 23 3.500 14 9 11z" fill="#0f4d94" />
          <path d="M14.500 14c-1 2 1 3.500 4 3.500 2 0 4-1 5-2.500-.5 2.500-2 5-4 6-6 1-9.500-3-7-8z" fill="#e9f6e6" />
        </svg>
      </TaskButton>
      <TaskButton label="Discord" dot="w-[6px] bg-[#c0261c]" className="bg-[#e8abaa] relative">
        <span className="size-6 rounded-full bg-[#5865f2] grid place-items-center">
          <FaDiscord className="size-[15px] text-white" />
        </span>
        <span className="absolute top-[3px] right-[4px] size-[14px] rounded-full border-4 border-[#dc4444] bg-white" />
      </TaskButton>
      <TaskButton label="ゆっくりMovieMaker" dot="w-[6px] bg-[#6d8f6d]">
        <YmmIcon className="size-6 text-[15px]" />
      </TaskButton>
      <TaskButton label="ブラウザー" dot="w-[6px] bg-[#6d8f6d]">
        <svg viewBox="0 0 24 24" className="size-6">
          <circle cx="12" cy="12" r="12" fill="#fff" />
          <path d="M4.500 9a8 6 0 0 1 15 0z" fill="#2ab3ea" />
          <path d="M3.500 11h17a8.500 8.500 0 0 1-17 0z" fill="#1793d8" />
          <path d="M5 10.500c3 3.500 11 3.500 14 0" fill="none" stroke="#fff" strokeWidth="1.500" />
        </svg>
      </TaskButton>
      <TaskButton label="タスク マネージャー" dot="w-[6px] bg-[#6d8f6d]">
        <svg viewBox="0 0 24 18" className="w-6 h-[18px]">
          <rect x=".5" y=".5" width="23" height="17" fill="#dbe9f5" stroke="#8fa3b5" />
          <path d="M1.500 15l3-3 2 1 2-10 2 9 3-1 2-7 2 9 2-2 3 5v1h-21z" fill="#8cc0ea" stroke="#3d86c6" strokeWidth=".8" />
        </svg>
      </TaskButton>
      <TaskButton label="メモ帳" dot="w-[6px] bg-[#6d8f6d]">
        <svg viewBox="0 0 20 24" className="w-5 h-6">
          <path d="M1 3h18v19H1z" fill="#39b6dc" />
          <path d="M3 0v5M6.500 0v5M10 0v5M13.500 0v5M17 0v5" stroke="#17657f" strokeWidth="1.400" />
          <path d="M4 9h12M4 13h12M4 17h12" stroke="#0f5f86" strokeWidth="1.600" />
          <path d="M1 21.500h18V24H1z" fill="#a84a1c" />
        </svg>
      </TaskButton>
    </div>
    <div className="flex items-center justify-end pr-[20px] text-[#222]">
      <button aria-label="隠れているインジケーター">
        <ChevronUp className="size-4" strokeWidth={2.2} />
      </button>
      <span className="ml-[16px] w-[14px] text-center text-[13px] text-transparent [-webkit-text-stroke:1px_#9aa59a]">A</span>
      <svg viewBox="0 0 16 14" className="w-4 h-[14px] ml-[23px]">
        <circle cx="6.500" cy="7" r="6.500" fill="#0c64c8" />
        <circle cx="12" cy="11" r="2.800" fill="#e0a92c" />
        <circle cx="13.500" cy="9.500" r="2" fill="#c93a2a" />
      </svg>
      <Wifi className="size-[18px] ml-[21px]" strokeWidth={1.7} />
      <Volume2 className="size-[18px] ml-[6px]" strokeWidth={1.6} />
      <span className="ml-[12px] flex flex-col text-right text-[12px] leading-4 text-[#333]">
        <span>2:19</span>
        <span>2025/08/15</span>
      </span>
      <svg viewBox="0 0 16 16" className="size-[15px] ml-[8px]" fill="none" stroke="#222" strokeWidth="1.300">
        <path d="M8 1.500A5 5 0 0 0 3 6.500V10l-1.500 2.500h12L12.500 10V8M5.500 13a2 2 0 0 0 4 0" />
        <path d="M6 6h3l-3 4h3M11 1h3.500L11 5h3.500" />
      </svg>
    </div>
  </footer>
);

export default function App() {
  return (
    <div className="h-screen w-full overflow-hidden flex flex-col font-['Noto_Sans','Noto_Sans_CJK_JP',sans-serif] [font-feature-settings:'palt']">
      <main className="relative flex-1 min-h-0 overflow-hidden">
        <MovieMaker />
        <TaskManager />
        <Browser />
      </main>
      <Taskbar />
    </div>
  );
}
